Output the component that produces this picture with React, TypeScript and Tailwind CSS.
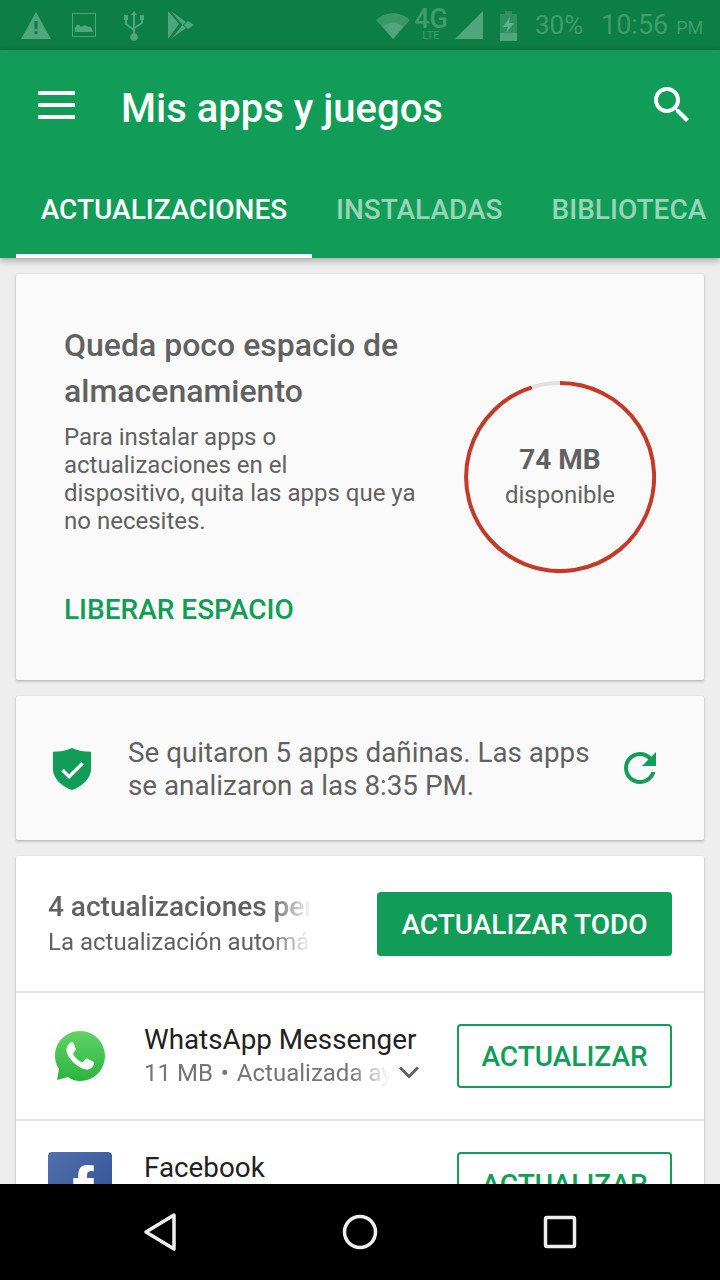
const FADE = "[mask-image:linear-gradient(to_right,black_84%,transparent)]";

function StatusBar() {
  return (
    <div className="h-[50px] shrink-0 bg-[#0d7e45] flex items-center text-[#3f9d6d]">
      <div className="flex items-center w-[360px]">
        <svg viewBox="0 0 30 28" className="ml-[21px] w-[30px] h-[28px] fill-[#4fa67b]">
          <path fillRule="evenodd" d="M15 1 L30 28 H0 Z M13.5 10 V18 H16.5 V10 Z M13.5 20 V23 H16.5 V20 Z" />
        </svg>
        <svg viewBox="0 0 24 24" className="ml-[21px] w-[24px] h-[24px]">
          <rect x="0.5" y="0.5" width="23" height="23" fill="none" stroke="#4fa67b" />
          <path d="M3 19 V15 C5 11 7 11 9 14 C11 12 14 12 16 14 C18 13 20 14 21 19 Z" fill="#4fa67b" />
        </svg>
        <svg viewBox="0 0 22 30" className="ml-[27px] w-[22px] h-[30px] mt-[2px]">
          <path d="M11 3 V24 M3 9 V13 L11 19 M19 9 V12 L11 17" fill="none" stroke="#4fa67b" strokeWidth="2" />
          <path d="M11 0 L14 4 H8 Z M1 4 H5 V9 H1 Z M17 4 H21 V9 H17 Z" fill="#4fa67b" />
          <circle cx="11" cy="26" r="3.8" fill="#4fa67b" />
        </svg>
        <svg viewBox="0 0 26 28" className="ml-[23px] w-[26px] h-[28px]">
          <path d="M0 0 L11 13 L0 28 Z M3 0 L18 11 L14.5 14 Z M3 28 L18 17 L14.5 14 Z M20 10 L26 14 L20 18 L16 14 Z" fill="#4fa67b" />
        </svg>
      </div>
      <div className="flex items-center w-[360px] relative h-full">
        <svg viewBox="0 0 34 26" className="ml-[16px] w-[34px] h-[26px] mt-[2px]">
          <path d="M0 7 C9 -2 25 -2 34 7 L17 26 Z" fill="#3a9868" />
          <path d="M7 14 C13 8 21 8 27 14 L17 26 Z" fill="#4fa67b" />
        </svg>
        <div className="ml-[4px] w-[34px] flex flex-col items-center leading-none mt-[-2px]">
          <span className="text-[27px] leading-[22px] font-medium">4G</span>
          <span className="text-[11px] leading-[11px]">LTE</span>
        </div>
        <svg viewBox="0 0 28 28" className="ml-[7px] w-[28px] h-[28px]">
          <path d="M0 28 L28 0 V28 Z" fill="#4fa67b" />
        </svg>
        <svg viewBox="0 0 20 30" className="ml-[16px] w-[20px] h-[30px] mt-[1px]">
          <path d="M6 0 H13 V3 H18 V30 H1 V3 H6 Z" fill="#2f9160" />
          <path d="M1 22 H18 V30 H1 Z" fill="#4fa67b" />
          <path d="M11 6 L4 16 H9 L7 22 L15 12 H10 Z" fill="#5fb189" />
        </svg>
        <span className="ml-[16px] w-[48px] text-[26px] leading-none">30%</span>
        <span className="ml-[18px] text-[27px] leading-none">10:56</span>
        <span className="ml-[8px] mt-[5px] text-[18px] leading-none">PM</span>
      </div>
    </div>
  );
}

function Header() {
  return (
    <div className="shrink-0 bg-[#119d58] shadow-[0_2px_8px_rgba(0,0,0,0.35)] relative z-10">
      <div className="h-[116px] flex items-center pl-[38px] pr-[24px]">
        <div className="w-[37px] shrink-0 flex flex-col gap-[8px] -mt-[6px]">
          <div className="h-[4px] bg-white" />
          <div className="h-[4px] bg-white" />
          <div className="h-[4px] bg-white" />
        </div>
        <h1 className="ml-[46px] mt-[2px] flex-1 text-white text-[40px] font-medium">Mis apps y juegos</h1>
        <svg viewBox="0 0 24 24" className="w-[48px] h-[48px] fill-white -mt-[6px]">
          <path d="M15.5 14h-.79l-.28-.27C15.41 12.59 16 11.11 16 9.5 16 5.91 13.09 3 9.5 3S3 5.91 3 9.5 5.91 16 9.5 16c1.61 0 3.09-.59 4.23-1.57l.27.28v.79l5 4.99L20.49 19l-4.99-5zm-6 0C7.01 14 5 11.99 5 9.5S7.01 5 9.5 5 14 7.01 14 9.5 11.99 14 9.5 14z" />
        </svg>
      </div>
      <div className="h-[92px] flex items-stretch pl-[16px] text-[28px] font-medium whitespace-nowrap overflow-hidden">
        <div className="w-[296px] flex items-center justify-center text-white border-b-4 border-white">ACTUALIZACIONES</div>
        <div className="ml-[24px] pb-[4px] flex items-center text-[#98d4b5]">INSTALADAS</div>
        <div className="ml-[49px] pb-[4px] flex items-center text-[#98d4b5]">BIBLIOTECA</div>
      </div>
    </div>
  );
}

function StorageCard() {
  return (
    <section className="h-[406px] shrink-0 bg-[#fafafa] shadow-[0_1px_3px_rgba(0,0,0,0.3)] rounded-[2px] flex pl-[48px]">
      <div className="w-[360px] shrink-0 pt-[48px]">
        <h2 className="text-[#616161] text-[32px] leading-[46px] font-medium whitespace-nowrap">
          Queda poco espacio de<br />almacenamiento
        </h2>
        <p className="mt-[9px] text-[#616161] text-[24px] leading-[28px] whitespace-nowrap">
          Para instalar apps o<br />actualizaciones en el<br />dispositivo, quita las apps que ya<br />no necesites.
        </p>
        <div className="mt-[59px] text-[#119d58] text-[28px] font-medium leading-[32px] whitespace-nowrap">LIBERAR ESPACIO</div>
      </div>
      <div className="relative ml-[40px] mt-[107px] w-[192px] h-[192px] flex flex-col items-center justify-center text-[#616161]">
        <svg viewBox="0 0 192 192" className="absolute inset-0 w-full h-full">
          <path d="M96 2 A94 94 0 1 1 68 6.3" fill="none" stroke="#c53929" strokeWidth="4" />
          <path d="M68 6.3 A94 94 0 0 1 96 2" fill="none" stroke="#e0e0e0" strokeWidth="4" />
        </svg>
        <span className="text-[28px] leading-[36px] font-bold">74 MB</span>
        <span className="text-[24px] leading-[34px]">disponible</span>
      </div>
    </section>
  );
}

function ScanCard() {
  return (
    <section className="h-[144px] shrink-0 bg-[#fafafa] shadow-[0_1px_3px_rgba(0,0,0,0.3)] rounded-[2px] flex items-center">
      <svg viewBox="0 0 40 44" className="ml-[36px] mt-[2px] w-[40px] h-[42px] shrink-0">
        <path d="M20 0 C26 3 33 4 40 4 V22 C40 32 30 41 20 44 C10 41 0 32 0 22 V4 C7 4 14 3 20 0 Z" fill="#119d58" />
        <path d="M10 23 L17 30 L31 16" fill="none" stroke="#fff" strokeWidth="3.6" />
      </svg>
      <p className="ml-[36px] mt-[2px] w-[480px] text-[#616161] text-[27.8px] leading-[33px] whitespace-nowrap">
        Se quitaron 5 apps dañinas. Las apps<br />se analizaron a las 8:35 PM.
      </p>
      <svg viewBox="0 0 24 24" className="ml-[8px] w-[48px] h-[48px] fill-[#119d58] shrink-0">
        <path d="M17.65 6.35C16.2 4.9 14.21 4 12 4c-4.42 0-7.99 3.58-7.99 8s3.57 8 7.99 8c3.73 0 6.84-2.55 7.73-6h-2.08c-.82 2.33-3.04 4-5.65 4-3.31 0-6-2.69-6-6s2.69-6 6-6c1.66 0 3.14.69 4.22 1.78L13 11h7V4l-2.35 2.35z" />
      </svg>
    </section>
  );
}

function WhatsAppIcon() {
  return (
    <svg viewBox="0 0 52 52" className="w-[52px] h-[52px]">
      <defs>
        <linearGradient id="wa" x1="0" y1="0" x2="0" y2="1">
          <stop offset="0" stopColor="#5fd469" />
          <stop offset="1" stopColor="#2bb33f" />
        </linearGradient>
      </defs>
      <path d="M26 1 C12 1 1 12 1 26 C1 31 2.5 35.5 5 39 L3 50 L14 47 C17 49.5 21.5 51 26 51 C40 51 51 40 51 26 C51 12 40 1 26 1 Z" fill="url(#wa)" />
      <path d="M17.5 12 C15 13 12 16 12.5 21 C13.5 28 23 38 32 39.5 C36 40 39.5 37 40 34 C40.2 32.5 40 32 39 31.5 L33.5 28.8 C32.5 28.4 32 28.5 31.3 29.3 L29.3 31.8 C28.7 32.4 28.2 32.5 27.3 32 C24 30.5 21 27.5 19.5 24.5 C19 23.6 19.2 23 19.8 22.4 L21.5 20.3 C22 19.7 22 19.2 21.7 18.5 L19.5 13 C19 12 18.5 11.8 17.5 12 Z" fill="#fff" />
    </svg>
  );
}

function UpdatesCard() {
  return (
    <section className="shrink-0 bg-white shadow-[0_1px_3px_rgba(0,0,0,0.3)] rounded-[2px]">
      <div className="h-[137px] flex items-start pl-[32px] border-b-2 border-[#e2e2e2]">
        <div className={`w-[264px] mt-[32px] overflow-hidden whitespace-nowrap ${FADE}`}>
          <div className="text-[#616161] text-[28px] leading-[38px] font-medium">4 actualizaciones pendientes</div>
          <div className="text-[#616161] text-[24px] leading-[32px]">La actualización automática está desactivada</div>
        </div>
        <button className="ml-[65px] mt-[36px] w-[295px] h-[64px] pt-[2px] rounded-[4px] bg-[#119d58] text-white text-[28px] font-medium whitespace-nowrap">
          ACTUALIZAR TODO
        </button>
      </div>
      <div className="h-[128px] flex items-start border-b-2 border-[#e2e2e2]">
        <div className="ml-[38px] mt-[37px] shrink-0"><WhatsAppIcon /></div>
        <div className="ml-[38px] mt-[29px] w-[280px] relative shrink-0">
          <div className="text-[#212121] text-[27.8px] leading-[36px] whitespace-nowrap">WhatsApp Messenger</div>
          <div className={`w-[246px] text-[#757575] text-[24px] leading-[30px] overflow-hidden whitespace-nowrap ${FADE}`}>
            11 MB<span className="mx-[2px]"> • </span>Actualizada ayer
          </div>
          <svg viewBox="0 0 24 24" className="absolute left-[247px] top-[32px] w-[36px] h-[36px]">
            <path d="M6 9 L12 15 L18 9" fill="none" stroke="#616161" strokeWidth="2" />
          </svg>
        </div>
        <button className="ml-[33px] mt-[31px] pt-[1px] w-[215px] h-[64px] shrink-0 rounded-[4px] border-2 border-[#119d58] text-[#119d58] text-[28px] font-medium whitespace-nowrap">
          ACTUALIZAR
        </button>
      </div>
      <div className="h-[64px] flex items-start overflow-hidden">
        <div className="ml-[32px] mt-[31px] w-[64px] h-[64px] rounded-[4px] bg-gradient-to-br from-[#5470ad] to-[#2f4f92] shrink-0 flex justify-center overflow-hidden">
          <span className="text-white text-[64px] leading-[64px] font-bold font-['Liberation_Sans',sans-serif] mt-[6px] ml-[6px]">f</span>
        </div>
        <div className="ml-[32px] mt-[29px] w-[280px] shrink-0 text-[#212121] text-[27.8px] leading-[36px]">Facebook</div>
        <button className="ml-[33px] mt-[31px] pt-[1px] w-[215px] h-[64px] shrink-0 rounded-[4px] border-2 border-[#119d58] text-[#119d58] text-[28px] font-medium whitespace-nowrap">
          ACTUALIZAR
        </button>
      </div>
    </section>
  );
}

function NavBar() {
  return (
    <div className="h-[96px] shrink-0 bg-black relative z-10 flex items-center justify-center gap-[164px]">
      <svg viewBox="0 0 36 40" className="w-[36px] h-[40px]">
        <path d="M32 3 L4 20 L32 37 Z" fill="none" stroke="#eee" strokeWidth="3.5" strokeLinejoin="round" />
      </svg>
      <svg viewBox="0 0 36 36" className="w-[36px] h-[36px]">
        <circle cx="18" cy="18" r="15.5" fill="none" stroke="#eee" strokeWidth="3.5" />
      </svg>
      <svg viewBox="0 0 36 36" className="w-[36px] h-[36px]">
        <rect x="3.5" y="3.5" width="29" height="29" rx="1.5" fill="none" stroke="#eee" strokeWidth="3.5" />
      </svg>
    </div>
  );
}

export default function App() {
  return (
    <div className="w-[720px] h-[1280px] overflow-hidden flex flex-col bg-[#eeeeee] font-['Roboto',sans-serif]">
      <StatusBar />
      <Header />
      <main className="flex-1 min-h-0 overflow-hidden px-[16px] pt-[16px] flex flex-col gap-[16px]">
        <StorageCard />
        <ScanCard />
        <UpdatesCard />
      </main>
      <NavBar />
    </div>
  );
}
